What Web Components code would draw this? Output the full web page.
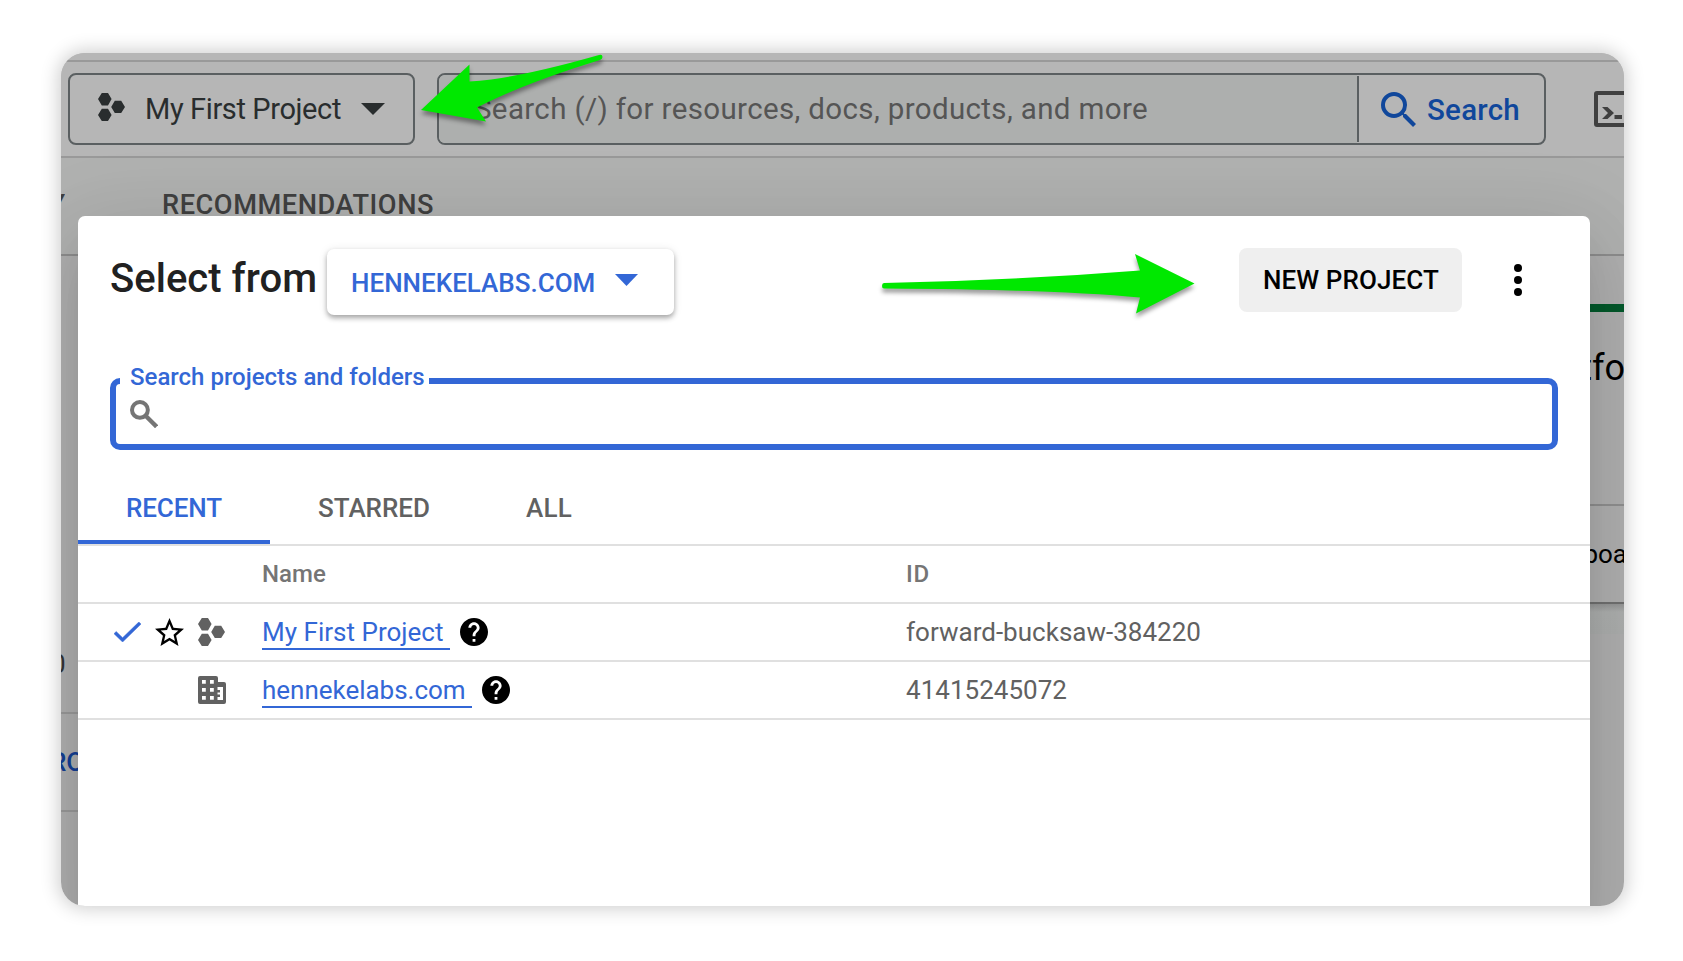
<!DOCTYPE html>
<html lang="en">
<head>
<meta charset="utf-8">
<title>Select a project</title>
<style>
html,body{margin:0;height:100%;background:#fff;overflow:hidden}
body{font-family:Roboto,"Liberation Sans",sans-serif}
</style>
</head>
<body>
<console-window></console-window>
<script>
const define = (name, html, setup) => {
  const t = document.createElement('template');
  t.innerHTML = html;
  customElements.define(name, class extends HTMLElement {
    constructor() {
      super();
      this.attachShadow({ mode: 'open' }).append(t.content.cloneNode(true));
    }
    connectedCallback() { if (setup) setup(this, this.shadowRoot); }
  });
};

/* Text run tracked to a fixed advance width. */
define('fit-text', `<style>:host{display:block;white-space:nowrap;flex:none}span{display:inline-block}</style><span><slot></slot></span>`, (host, root) => {
  const w = +host.getAttribute('w');
  const span = root.querySelector('span');
  const natural = span.getBoundingClientRect().width;
  const n = host.textContent.length;
  if (w && natural) span.style.letterSpacing = ((w - natural) / n).toFixed(3) + 'px';
  if (w) host.style.width = w + 'px';
});

const ICONS = {
  hex: ['0 0 27 28', '<path d="M3.8 0h6.200L13.600 6 10 12.500H3.800L0 6zM3.800 15.800H10L13.600 22 10 28H3.800L0 22zM16.800 7.800h6.400L27 14l-3.800 6h-6.400L13.200 14z"/>'],
  caret: ['0 0 24 12', '<path d="M0 0h24L12 12z"/>'],
  search: ['3 3 17.49 17.49', '<path d="M15.500 14h-.790l-.280-.270A6.471 6.471 0 0 0 16 9.500 6.500 6.500 0 1 0 9.500 16c1.610 0 3.090-.590 4.230-1.570l.270.280v.790l5 4.990L20.490 19l-4.990-5zm-6 0C7.010 14 5 11.990 5 9.500S7.010 5 9.500 5 14 7.010 14 9.500 11.990 14 9.500 14z"/>'],
  searchBold: ['3 3 17.49 17.49', '<circle cx="9.200" cy="9.200" r="4.950" fill="none" stroke="currentColor" stroke-width="2.500"/><path d="m12.600 12.700 7 7" stroke="currentColor" stroke-width="2.700"/>'],
  terminal: ['0 0 44 36', '<path fill-rule="evenodd" d="M3 0h38a3 3 0 0 1 3 3v30a3 3 0 0 1-3 3H3a3 3 0 0 1-3-3V3a3 3 0 0 1 3-3zM4 4v28h36V4z"/><path d="M8 16h5.500l6.500 6-6.500 6H8l6-6zM20.500 24H28v4h-7.500z"/>'],
  check: ['3.400 5.590 17.600 13.410', '<path d="M9 16.170 4.830 12l-1.420 1.410L9 19 21 7l-1.410-1.410z" stroke="currentColor" stroke-width=".35"/>'],
  star: ['2 2 20 19', '<path d="m22 9.240-7.190-.620L12 2 9.190 8.630 2 9.240l5.460 4.730L5.820 21 12 17.270 18.180 21l-1.630-7.030L22 9.240zM12 15.400l-3.760 2.270 1-4.280-3.320-2.880 4.380-.380L12 6.100l1.710 4.040 4.380.380-3.320 2.880 1 4.280L12 15.400z"/>'],
  help: ['2 2 20 20', '<path d="M12 2C6.480 2 2 6.480 2 12s4.480 10 10 10 10-4.480 10-10S17.520 2 12 2zm1 17h-2v-2h2v2zm2.070-7.750-.900.920C13.450 12.900 13 13.500 13 15h-2v-.500c0-1.100.450-2.100 1.170-2.830l1.240-1.260c.370-.360.590-.860.590-1.410 0-1.100-.900-2-2-2s-2 .900-2 2H8c0-2.210 1.790-4 4-4s4 1.790 4 4c0 .880-.360 1.680-.930 2.250z"/>'],
  building: ['0 0 28 28', '<path fill-rule="evenodd" d="M2 0h16a2 2 0 0 1 2 2v4h6a2 2 0 0 1 2 2v18a2 2 0 0 1-2 2H2a2 2 0 0 1-2-2V2a2 2 0 0 1 2-2zM4 4v3.800h3.800V4zM12 4v3.800h3.800V4zM4 12v3.800h3.800V12zM12 12v3.800h3.800V12zM4 20v3.800h3.800V20zM12 20v3.800h3.800V20zM19.500 11v3H22v2.500h-2.500v2H22V21h-2.500v3H25V11z"/>'],
  more: ['0 0 8 32', '<circle cx="4" cy="4" r="4"/><circle cx="4" cy="16" r="4"/><circle cx="4" cy="28" r="4"/>']
};
define('ui-icon', `<style>:host{display:block;flex:none}svg{display:block;width:100%;height:100%;fill:currentColor}</style><svg preserveAspectRatio="none"></svg>`, (host, root) => {
  const [vb, body] = ICONS[host.getAttribute('name')];
  const svg = root.querySelector('svg');
  svg.setAttribute('viewBox', vb);
  svg.innerHTML = body;
  host.style.width = host.getAttribute('w') + 'px';
  host.style.height = host.getAttribute('h') + 'px';
});

define('console-bar', `<style>
:host{display:flex;box-sizing:border-box;height:98px;padding:11px 0 0 7px;border-bottom:2px solid #999;background:#b6b6b6;font-size:29px;line-height:34px;color:#292d2e}
.box{box-sizing:border-box;height:72px;border:2px solid #5a5f61;border-radius:8px;display:flex;align-items:center;flex:none}
.project{width:347px;padding-left:28px}
.project fit-text{margin:0 0 0 20px}
.project ui-icon:last-child{margin:0 0 0 20px}
.find{width:1109px;margin-left:22px;overflow:hidden}
.input{width:918px;height:68px;flex:none;background:#adafae;color:#555;box-sizing:border-box;padding:17px 0 0 35px;font-size:29.500px}
.go{display:flex;align-items:center;height:66px;border-left:2px solid #5a5f61;color:#10479b;font-weight:500;font-size:29.500px;padding-left:22px;flex:1}
.go fit-text{margin:2px 0 0 11px}
.term{margin:18px 0 0 48px;color:#404040}
</style>
<div class="box project"><ui-icon name="hex" w="27" h="28" style="margin-top:-4px"></ui-icon><fit-text w="196">My First Project</fit-text><ui-icon name="caret" w="24" h="12"></ui-icon></div>
<div class="box find"><div class="input"><fit-text w="674">Search (/) for resources, docs, products, and more</fit-text></div>
<div class="go"><ui-icon name="search" w="35" h="35"></ui-icon><fit-text w="93">Search</fit-text></div></div>
<ui-icon class="term" name="terminal" w="44" h="36"></ui-icon>`);

define('console-page', `<style>
:host{display:flex;flex-direction:column;height:853px;background:#afafaf}
.top{height:7px;background:#b6b6b6;border-bottom:2px solid #999;flex:none}
console-bar{flex:none;height:96px}
.sub{box-sizing:border-box;height:98px;flex:none;border-bottom:2px solid #8d8d8d;background:#b0b1b0;display:flex;font-weight:500;font-size:27.200px;line-height:32px;color:#404040;padding-top:31px}
.y{width:4px;overflow:hidden;display:flex;justify-content:flex-end;margin-right:97px}
.cols{flex:1;display:flex;justify-content:space-between;min-height:0}
.l{width:17px;display:flex;flex-direction:column;overflow:hidden}
.l>div{box-sizing:border-box;border-bottom:2px solid #999;flex:none;display:flex}
.r{width:34px;display:flex;flex-direction:column;overflow:hidden}
.r>div{box-sizing:border-box;flex:none;display:flex;justify-content:flex-end}
</style>
<div class="top"></div><console-bar></console-bar>
<div class="sub"><div class="y">Y</div><fit-text w="272">RECOMMENDATIONS</fit-text></div>
<div class="cols">
<div class="l"><div style="height:458px;padding-top:392px;font-size:26px;line-height:32px;color:#333"><span style="margin-left:-10px">0</span></div>
<div style="height:98px;padding-top:32px;font-size:26px;font-weight:500;line-height:32px;color:#143f94"><span style="margin-left:-11px">RO</span></div></div>
<div class="r"><div style="height:56px;border-bottom:8px solid #04592b"></div>
<div style="height:194px;border-bottom:2px solid #8f8f8f;font-size:36px;line-height:42px;padding-top:35px;color:#000"><span style="margin-right:-1px;font-variant-ligatures:none">tfo</span></div>
<div style="height:98px;border-bottom:2px solid #707070;font-size:26px;line-height:32px;padding-top:32px;color:#000"><span style="margin-right:-3px">poa</span></div>
<div style="height:30px;background:linear-gradient(#959696,#adafae 8px,#acaead)"></div></div>
</div>`);

define('org-button', `<style>
:host{box-sizing:border-box;display:flex;align-items:center;width:347px;height:66px;padding:2px 0 0 24px;border-radius:7px;background:#fff;color:#3367d6;font-size:26px;line-height:32px;font-weight:500;box-shadow:0 3px 5px rgba(0,0,0,.3),0 1px 10px rgba(0,0,0,.1)}
ui-icon{margin:-6px 0 0 18px}
</style><fit-text w="246"><slot></slot></fit-text><ui-icon name="caret" w="23" h="12"></ui-icon>`);

define('search-field', `<style>
:host{box-sizing:border-box;display:block;height:82px;width:1448px;padding-top:11px;font-size:24px;line-height:28px;font-weight:500;color:#3367d6}
fieldset{box-sizing:border-box;width:1448px;height:72px;border:6px solid #3367d6;border-radius:10px;margin:0;padding:22px 0 0 14px;position:relative;color:#757575}
.label{position:absolute;left:4px;top:-21px;width:299px;padding-left:10px;background:#fff;color:#3367d6}
</style><fieldset><div class="label"><fit-text w="295"><slot></slot></fit-text></div><ui-icon name="searchBold" w="28" h="28" style="margin-top:-6px"></ui-icon></fieldset>`);

define('tab-item', `<style>
:host{box-sizing:border-box;display:block;padding:26px 48px 0;height:78px;font-size:26px;line-height:32px;font-weight:500;color:#616161}
:host([active]){color:#3367d6;border-bottom:4px solid #3367d6}
</style><slot></slot>`);

define('project-row', `<style>
:host{box-sizing:border-box;display:flex;align-items:center;height:58px;border-bottom:2px solid #e0e0e0;font-size:26px;line-height:32px;color:#616161}
.icons{width:148px;display:flex;align-items:center;justify-content:flex-end;padding-right:36px;height:56px}
.name{width:644px;display:flex;align-items:center}
.id{flex:1}
</style><div class="icons"><slot name="icons"></slot></div><div class="name"><slot name="name"></slot></div><div class="id"><slot></slot></div>`);

define('project-link', `<style>
:host{display:block;box-sizing:border-box;height:33px;margin-top:3px;margin-right:10px;border-bottom:2px solid #3367d6;color:#3367d6;line-height:30px}
</style><slot></slot>`);

define('project-dialog', `<style>
:host{box-sizing:border-box;display:flex;flex-direction:column;width:1512px;height:720px;background:#fff;border-radius:7px 7px 0 0;box-shadow:0 22px 30px -14px rgba(0,0,0,.12),0 28px 76px 6px rgba(0,0,0,.09),0 18px 92px 16px rgba(0,0,0,.06)}
header{display:flex;height:151px;flex:none;box-sizing:border-box;padding:32px 0 0 32px}
h1{margin:7px 0 0;font-size:40px;line-height:48px;font-weight:500;color:#212121;width:217px;height:48px}
org-button{margin-top:1px}
button{font:500 26px/32px Roboto,sans-serif;box-sizing:border-box;width:223px;height:64px;border:0;border-radius:8px;background:#efefef;color:#000;margin:0 0 0 565px;padding:0 0 0 24px;display:flex;align-items:center}
search-field{margin-left:32px;flex:none}
nav{display:flex;height:97px;box-sizing:border-box;padding-top:17px;border-bottom:2px solid #e0e0e0;flex:none}
.head{font-weight:500;font-size:24px;color:#757575}
ui-icon[name=check]{color:#3367d6}ui-icon[name=star]{color:#000}
</style>
<header><h1><fit-text w="207">Select from</fit-text></h1><org-button>HENNEKELABS.COM</org-button>
<button><fit-text w="176">NEW PROJECT</fit-text></button><ui-icon name="more" w="8" h="32" style="margin:16px 0 0 52px"></ui-icon></header>
<search-field>Search projects and folders</search-field>
<nav><tab-item active><fit-text w="96">RECENT</fit-text></tab-item><tab-item><fit-text w="112">STARRED</fit-text></tab-item><tab-item><fit-text w="46">ALL</fit-text></tab-item></nav>
<project-row class="head"><fit-text slot="name" w="64">Name</fit-text><fit-text w="24">ID</fit-text></project-row>
<project-row>
<ui-icon slot="icons" name="check" w="27" h="20"></ui-icon><ui-icon slot="icons" name="star" w="29" h="28" style="margin:0 14px"></ui-icon><ui-icon slot="icons" name="hex" w="27" h="28" style="color:#616161;margin-right:1px"></ui-icon>
<project-link slot="name"><fit-text w="188">My First Project&nbsp;</fit-text></project-link><ui-icon slot="name" name="help" w="28" h="28" style="color:#000"></ui-icon>
<fit-text w="295">forward-bucksaw-384220</fit-text></project-row>
<project-row>
<ui-icon slot="icons" name="building" w="28" h="28"></ui-icon>
<project-link slot="name"><fit-text w="210">hennekelabs.com&nbsp;</fit-text></project-link><ui-icon slot="name" name="help" w="28" h="28" style="color:#000"></ui-icon>
<fit-text w="161">41415245072</fit-text></project-row>`);

define('callout-arrow', `<style>:host{display:block;position:absolute;left:0;top:0;width:1683px;height:961px;pointer-events:none}svg{display:block;filter:drop-shadow(0 4px 2px rgba(0,0,0,.38))}</style><svg width="1683" height="961" viewBox="0 0 1683 961"><path fill="#00e800"/></svg>`,
  (host, root) => root.querySelector('path').setAttribute('d', host.getAttribute('d')));

define('console-window', `<style>
:host{display:block;box-sizing:border-box;width:1683px;height:961px;padding:53px 0 0 61px;position:relative}
.frame{width:1563px;height:853px;border-radius:24px;box-shadow:0 0 18px 3px rgba(0,0,0,.19)}
.clip{width:100%;height:100%;border-radius:24px;overflow:hidden;position:relative}
project-dialog{position:absolute;left:17px;top:163px}
</style>
<div class="frame"><div class="clip"><console-page></console-page><project-dialog></project-dialog></div></div>
<callout-arrow d="M421 110 469.500 64.500V81.500Q515 79 599 55Q602.500 54 602.500 57Q602.500 59 600 60Q525 83 477 107.500L486 121.500Z"></callout-arrow>
<callout-arrow d="M884 283Q1015 280.500 1140 270.500L1135 254 1194.500 283.500 1136 313.500 1140 297.500Q1060 289.500 884 288.500Q882 288.500 882 286Q882 283.200 884 283Z"></callout-arrow>`);
</script>
</body>
</html>
